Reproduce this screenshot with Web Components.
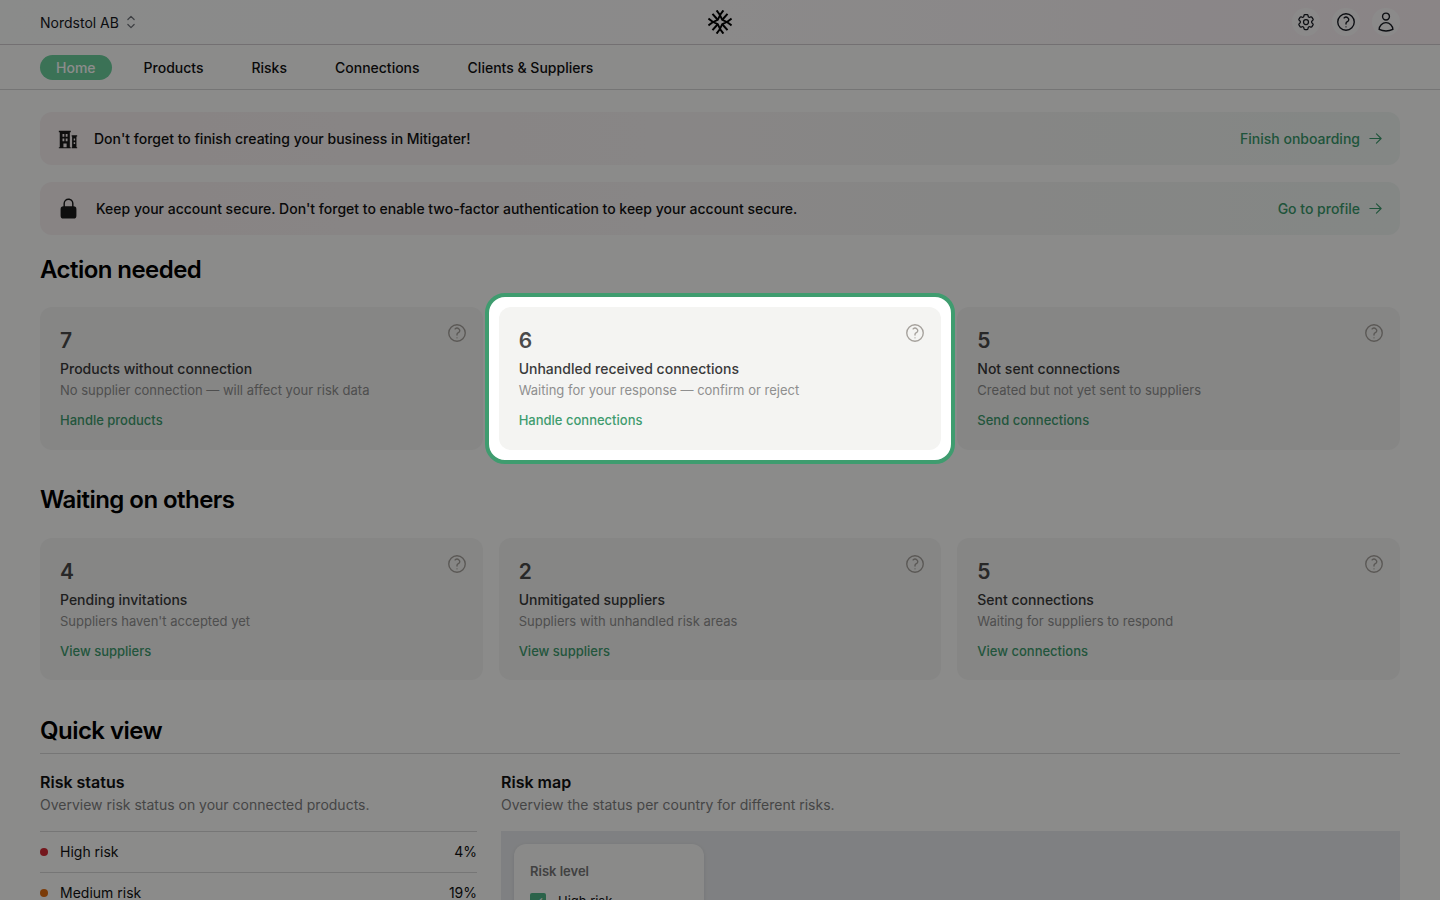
<!DOCTYPE html>
<html lang="en">
<head>
<meta charset="utf-8">
<title>Mitigater</title>
<style>
  html, body { margin: 0; height: 100%; overflow: hidden; }
  body { background: #fdfdfc; color: #111; font-family: Inter, "Liberation Sans", sans-serif; font-size: 14px; }
  main { display: block; padding: 22px 40px 0; }
</style>
</head>
<body>
<top-bar company="Nordstol AB"></top-bar>
<sub-nav></sub-nav>
<main>
  <notice-banner icon="building" size="22" gap="15" link="Finish onboarding">Don't forget to finish creating your business in Mitigater!</notice-banner>
  <notice-banner icon="lock" size="23" gap="16" link="Go to profile">Keep your account secure. Don't forget to enable two-factor authentication to keep your account secure.</notice-banner>

  <section-title style="margin-top:19px;margin-bottom:21px">Action needed</section-title>
  <card-row style="margin-bottom:34.4px">
    <stat-card value="7" title="Products without connection" text="No supplier connection — will affect your risk data" link="Handle products"></stat-card>
    <stat-card spotlight value="6" title="Unhandled received connections" text="Waiting for your response — confirm or reject" link="Handle connections"></stat-card>
    <stat-card value="5" title="Not sent connections" text="Created but not yet sent to suppliers" link="Send connections"></stat-card>
  </card-row>

  <section-title style="margin-bottom:21.9px">Waiting on others</section-title>
  <card-row style="margin-bottom:34.5px">
    <stat-card value="4" title="Pending invitations" text="Suppliers haven't accepted yet" link="View suppliers"></stat-card>
    <stat-card value="2" title="Unmitigated suppliers" text="Suppliers with unhandled risk areas" link="View suppliers"></stat-card>
    <stat-card value="5" title="Sent connections" text="Waiting for suppliers to respond" link="View connections"></stat-card>
  </card-row>

  <quick-view>
    <risk-row slot="rows" color="#d42a35" label="High risk" value="4%"></risk-row>
    <risk-row slot="rows" color="#e06d12" label="Medium risk" value="19%"></risk-row>
  </quick-view>
</main>

<script>
const paths = {
  question: `<path fill="none" stroke="currentColor" stroke-width="1.5" stroke-linecap="round" stroke-linejoin="round" d="M9.879 7.519c1.171-1.025 3.071-1.025 4.242 0 1.172 1.025 1.172 2.687 0 3.712-.203.179-.43.326-.67.442-.745.361-1.45.999-1.45 1.827v.75M21 12a9 9 0 1 1-18 0 9 9 0 0 1 18 0Zm-9 5.25h.008v.008H12v-.008Z"/>`,
  gear: `<path fill="none" stroke="currentColor" stroke-width="1.5" stroke-linecap="round" stroke-linejoin="round" d="M9.594 3.94c.09-.542.56-.94 1.11-.94h2.593c.55 0 1.02.398 1.11.94l.213 1.281c.063.374.313.686.645.87.074.04.147.083.22.127.325.196.72.257 1.075.124l1.217-.456a1.125 1.125 0 0 1 1.37.49l1.296 2.247a1.125 1.125 0 0 1-.26 1.431l-1.003.827c-.293.241-.438.613-.43.992a7.723 7.723 0 0 1 0 .255c-.008.378.137.75.43.991l1.004.827c.424.35.534.955.26 1.43l-1.298 2.247a1.125 1.125 0 0 1-1.369.491l-1.217-.456c-.355-.133-.75-.072-1.076.124a6.47 6.47 0 0 1-.22.128c-.331.183-.581.495-.644.869l-.213 1.281c-.09.543-.56.94-1.11.94h-2.594c-.55 0-1.019-.398-1.11-.94l-.213-1.281c-.062-.374-.312-.686-.644-.87a6.52 6.52 0 0 1-.22-.127c-.325-.196-.72-.257-1.076-.124l-1.217.456a1.125 1.125 0 0 1-1.369-.49l-1.297-2.247a1.125 1.125 0 0 1 .26-1.431l1.004-.827c.292-.24.437-.613.43-.991a6.932 6.932 0 0 1 0-.255c.007-.38-.138-.751-.43-.992l-1.004-.827a1.125 1.125 0 0 1-.26-1.43l1.297-2.247a1.125 1.125 0 0 1 1.37-.491l1.216.456c.356.133.751.072 1.076-.124.072-.044.146-.086.22-.128.332-.183.582-.495.644-.869l.214-1.28Z"/><path fill="none" stroke="currentColor" stroke-width="1.5" d="M15 12a3 3 0 1 1-6 0 3 3 0 0 1 6 0Z"/>`,
  user: `<path fill="none" stroke="currentColor" stroke-width="1.5" stroke-linecap="round" stroke-linejoin="round" d="M15.75 6a3.75 3.75 0 1 1-7.5 0 3.75 3.75 0 0 1 7.5 0ZM4.501 20.118a7.5 7.5 0 0 1 14.998 0A17.933 17.933 0 0 1 12 21.75c-2.676 0-5.216-.584-7.499-1.632Z"/>`,
  arrow: `<path fill="none" stroke="currentColor" stroke-width="1.8" stroke-linecap="round" stroke-linejoin="round" d="M13.5 4.5 21 12m0 0-7.5 7.5M21 12H3"/>`,
  updown: `<path fill="none" stroke="currentColor" stroke-width="1.5" stroke-linecap="round" stroke-linejoin="round" d="M8.25 15 12 18.75 15.75 15m-7.5-6L12 5.25 15.75 9"/>`,
  lock: `<path fill="currentColor" fill-rule="evenodd" d="M12 1.5a5.25 5.25 0 0 0-5.25 5.25v3a3 3 0 0 0-3 3v6.75a3 3 0 0 0 3 3h10.5a3 3 0 0 0 3-3v-6.75a3 3 0 0 0-3-3v-3c0-2.9-2.35-5.25-5.25-5.25Zm3.75 8.25v-3a3.75 3.75 0 1 0-7.5 0v3h7.5Z"/>`,
  building: `<path fill="currentColor" fill-rule="evenodd" d="M2 3h13v1.5h-1V21h1v1H2v-1h1V4.500H2V3Zm4 3.500v3h2v-3H6Zm3.500 0v3h2v-3h-2ZM6 11.500v3h2v-3H6Zm3.500 0v3h2v-3h-2ZM7 17v4h3.500v-4H7Z"/><path fill="currentColor" fill-rule="evenodd" d="M16 8h6v1.200h-.8V21h.8v1h-6v-1h.5V9.200H16V8Zm2.200 3.500v2h1.600v-2h-1.600Zm0 4v2h1.600v-2h-1.600Z"/>`
};
const svg = (name, size) => `<svg width="${size}" height="${size}" viewBox="0 0 24 24" aria-hidden="true">${paths[name]}</svg>`;

class TopBar extends HTMLElement {
  constructor() { super(); this.attachShadow({ mode: "open" }); }
  connectedCallback() {
    this.shadowRoot.innerHTML = `
    <style>
      :host { display: grid; grid-template-columns: 1fr auto 1fr; align-items: center; height: 44px; padding: 0 40px; border-bottom: 1px solid #d2cdd0;
        background: linear-gradient(90deg, #fbfdfc 0%, #fdfbfb 50%, #fbf2f5 100%); }
      .company { display: flex; align-items: center; gap: 2px; color: #16181d; }
      .company svg { color: #6f7278; }
      .logo { display: block; }
      .actions { display: flex; justify-content: flex-end; gap: 12px; }
      .btn { width: 28px; height: 28px; border-radius: 50%; display: flex; align-items: center; justify-content: center; background: #fdfcfc; color: #171a22; }
    </style>
    <div class="company">${this.getAttribute("company")} ${svg("updown", 20)}</div>
    <svg class="logo" width="24" height="24" viewBox="-12 -12 24 24" fill="none" stroke="#000">
      <path stroke-width="1.9" d="M0-6.800 2.200-2.200 6.800 0 2.200 2.200 0 6.800-2.200 2.200-6.800 0-2.200-2.200Z"/>
      <path stroke-width="2" d="M0-7-3.400-11.600M0-7 3.400-11.600M0 7-3.400 11.600M0 7 3.400 11.600M-7 0-11.600-3.400M-7 0-11.600 3.400M7 0 11.600-3.400M7 0 11.600 3.400"/>
      <path stroke-width="2" d="M2.500-2.500 7.500-8.200M-2.500-2.500-7.500-8.200M2.500 2.500 7.500 8.200M-2.500 2.500-7.500 8.200"/>
    </svg>
    <div class="actions">
      <span class="btn">${svg("gear", 20)}</span>
      <span class="btn">${svg("question", 22)}</span>
      <span class="btn">${svg("user", 22)}</span>
    </div>`;
  }
}

class SubNav extends HTMLElement {
  constructor() { super(); this.attachShadow({ mode: "open" }); }
  connectedCallback() {
    this.shadowRoot.innerHTML = `
    <style>
      :host { display: flex; align-items: center; gap: 48px; height: 44px; padding: 0 40px; border-bottom: 1px solid #d6d6d6; background: #fdfdfc; color: #111; font-weight: 450; }
      .home { background: #6ccf9d; color: #fff; border-radius: 13px; padding: 0 16px; height: 25px; line-height: 25px; margin-right: -17px; }
      .home + span { margin-left: 1px; }
    </style>
    <span class="home">Home</span><span>Products</span><span>Risks</span><span>Connections</span><span>Clients &amp; Suppliers</span>`;
  }
}

class NoticeBanner extends HTMLElement {
  constructor() { super(); this.attachShadow({ mode: "open" }); }
  connectedCallback() {
    const icon = this.getAttribute("icon");
    this.shadowRoot.innerHTML = `
    <style>
      :host { display: flex; align-items: center; height: 53px; padding: 0 17px; margin-bottom: 17px; border-radius: 12px; font-weight: 450; color: #111;
        background: linear-gradient(90deg, #f7f0f0 0%, #f8f4f4 45%, #f0f6f2 100%); }
      .icon { display: flex; color: #1a1a1a; margin-right: ${this.getAttribute("gap")}px; }
      .text { flex: 1; }
      .go { display: flex; align-items: center; gap: 8px; color: #3a9a6c; font-weight: 500; }
    </style>
    <span class="icon">${svg(icon, this.getAttribute("size"))}</span>
    <span class="text"><slot></slot></span>
    <span class="go">${this.getAttribute("link")} ${svg("arrow", 15)}</span>`;
  }
}

class SectionTitle extends HTMLElement {
  constructor() { super(); this.attachShadow({ mode: "open" }); }
  connectedCallback() {
    this.shadowRoot.innerHTML = `
    <style>
      :host { display: block; font-size: 24px; line-height: 32px; font-weight: 600; letter-spacing: -0.55px; color: #000; margin: 0 0 22px; }
    </style><slot></slot>`;
  }
}

class CardRow extends HTMLElement {
  constructor() { super(); this.attachShadow({ mode: "open" }); }
  connectedCallback() {
    this.shadowRoot.innerHTML = `
    <style>
      :host { display: grid; grid-template-columns: repeat(3, 1fr); gap: 16px; margin-bottom: 34px; }
    </style><slot></slot>`;
  }
}

class StatCard extends HTMLElement {
  constructor() { super(); this.attachShadow({ mode: "open" }); }
  connectedCallback() {
    this.shadowRoot.innerHTML = `
    <style>
      :host { display: block; position: relative; height: 142.6px; }
      :host([spotlight]) { z-index: 10; }
      :host([spotlight])::before { content: ""; position: absolute; inset: -14px; z-index: -1; background: #fff; border: 4px solid #3f9c6f; border-radius: 20px; box-shadow: 0 0 0 4000px rgba(0, 0, 0, .45); }
      .card { height: 100%; box-sizing: border-box; padding: 21px 20px 0; border-radius: 12px; background: #f4f4f2; }
      .head { display: flex; justify-content: space-between; }
      .value { font-size: 21px; line-height: 26px; font-weight: 600; color: #4a4a4a; }
      .q { color: #a5a19c; margin: -6px -5px 0 0; display: flex; height: 22px; }
      .title { font-weight: 500; color: #3a3a3a; line-height: 20px; margin-top: 5px; }
      .text { font-size: 13px; line-height: 20px; color: #8f8f8f; margin-top: 1px; }
      .link { font-size: 13px; font-weight: 500; color: #3f9c6f; line-height: 20px; margin-top: 10px; }
    </style>
    <div class="card">
      <div class="head"><div class="value">${this.getAttribute("value")}</div><div class="q">${svg("question", 22)}</div></div>
      <div class="title">${this.getAttribute("title")}</div>
      <div class="text">${this.getAttribute("text")}</div>
      <div class="link">${this.getAttribute("link")}</div>
    </div>`;
  }
}

class RiskRow extends HTMLElement {
  constructor() { super(); this.attachShadow({ mode: "open" }); }
  connectedCallback() {
    this.shadowRoot.innerHTML = `
    <style>
      :host { display: flex; align-items: center; height: 40px; border-top: 1px solid #d8d8d8; color: #111; }
      .dot { width: 8px; height: 8px; border-radius: 50%; margin-right: 12px; }
      .label { flex: 1; }
    </style>
    <span class="dot" style="background:${this.getAttribute("color")}"></span>
    <span class="label">${this.getAttribute("label")}</span>
    <span>${this.getAttribute("value")}</span>`;
  }
}

class QuickView extends HTMLElement {
  constructor() { super(); this.attachShadow({ mode: "open" }); }
  connectedCallback() {
    this.shadowRoot.innerHTML = `
    <style>
      :host { display: block; }
      h2 { margin: 0; font-size: 24px; line-height: 32px; font-weight: 600; letter-spacing: -0.55px; color: #000; padding-bottom: 6px; border-bottom: 1px solid #d8d8d8; }
      .cols { display: grid; grid-template-columns: 437px 1fr; gap: 24px; margin-top: 17px; }
      h3 { margin: 0; font-size: 16px; line-height: 22px; font-weight: 600; color: #111; }
      p { margin: 2px 0 16px; font-size: 14px; line-height: 20px; color: #7f7f7f; }
      .map { height: 200px; background: #e8eaed; padding: 13px; box-sizing: border-box; }
      .legend { width: 190px; height: 180px; box-sizing: border-box; padding: 17px 16px; border-radius: 12px; background: #fbfbfa; box-shadow: 0 1px 4px rgba(0,0,0,.1); font-size: 13px; }
      .legend b { display: block; font-weight: 600; color: #777; line-height: 20px; margin-bottom: 12px; }
      label { display: flex; align-items: center; gap: 12px; color: #111; }
      .check { width: 16px; height: 16px; border-radius: 2px; background: #4fb587; color: #fff; display: flex; align-items: center; justify-content: center; font-size: 12px; }
    </style>
    <h2>Quick view</h2>
    <div class="cols">
      <div>
        <h3>Risk status</h3>
        <p>Overview risk status on your connected products.</p>
        <slot name="rows"></slot>
      </div>
      <div>
        <h3>Risk map</h3>
        <p>Overview the status per country for different risks.</p>
        <div class="map"><div class="legend"><b>Risk level</b><label><span class="check">✓</span>High risk</label></div></div>
      </div>
    </div>`;
  }
}

customElements.define("top-bar", TopBar);
customElements.define("sub-nav", SubNav);
customElements.define("notice-banner", NoticeBanner);
customElements.define("section-title", SectionTitle);
customElements.define("card-row", CardRow);
customElements.define("stat-card", StatCard);
customElements.define("risk-row", RiskRow);
customElements.define("quick-view", QuickView);
</script>
</body>
</html>
